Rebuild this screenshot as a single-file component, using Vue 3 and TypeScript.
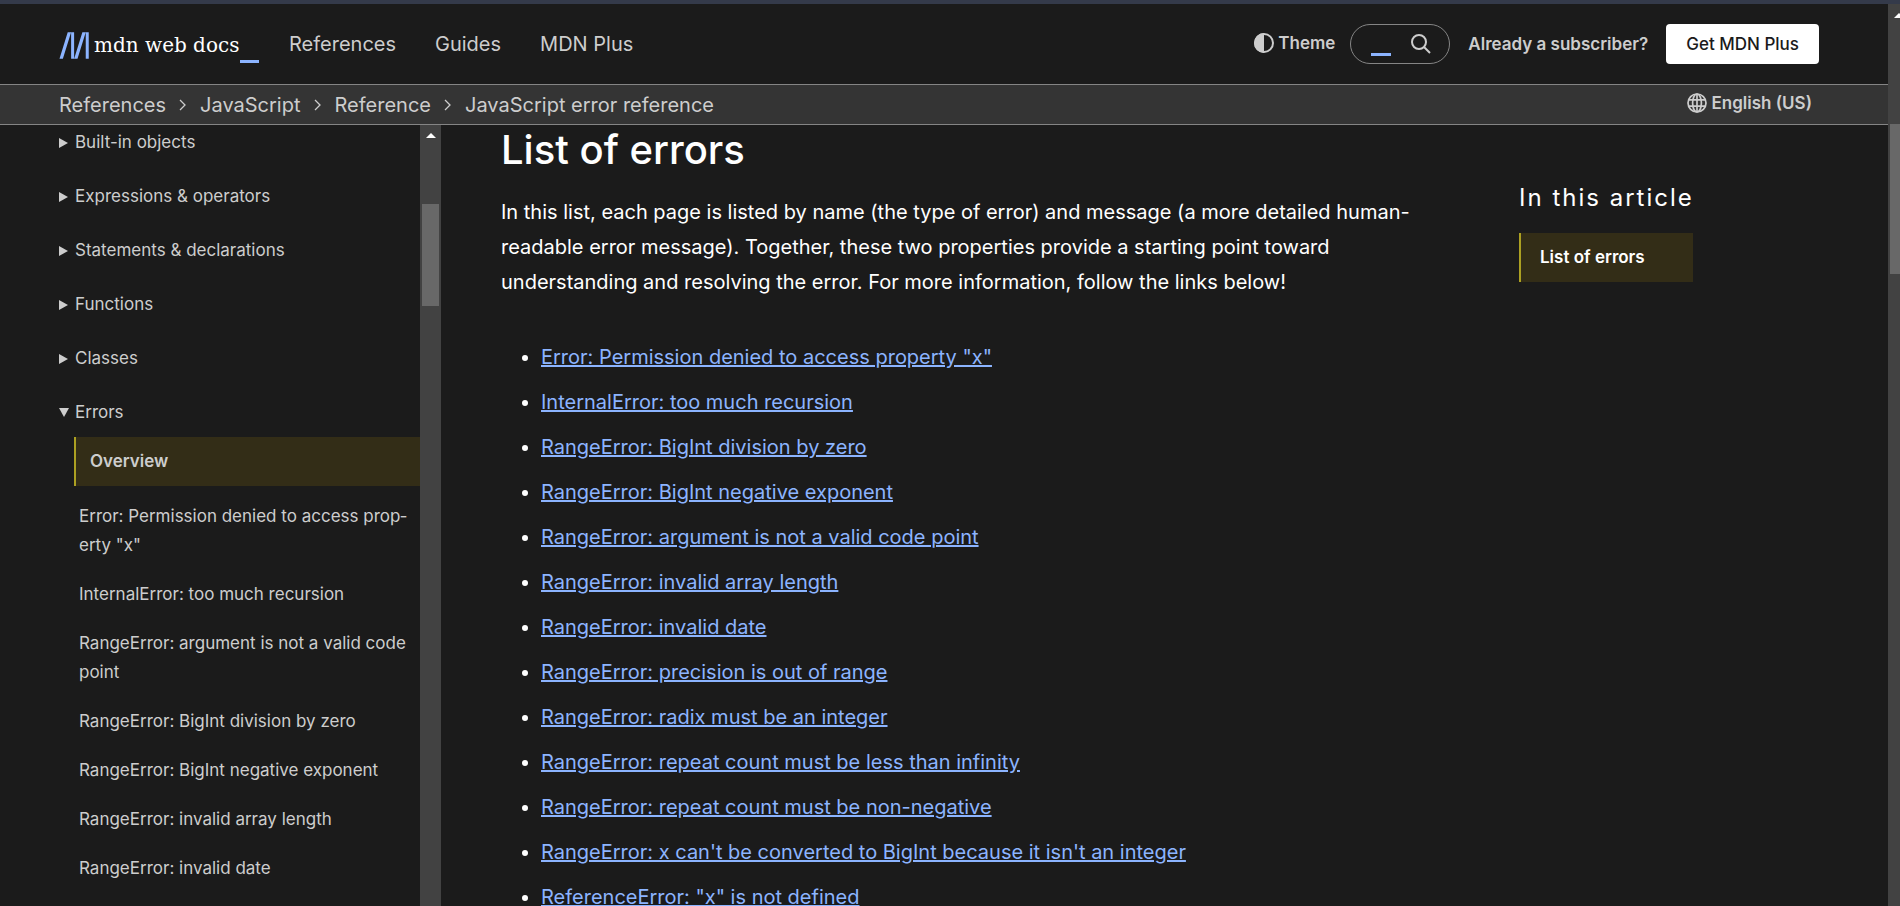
<script setup lang="ts">
interface SidebarLink {
  label: string
}

const navLinks: string[] = ['References', 'Guides', 'MDN Plus']
const crumbs: string[] = ['References', 'JavaScript', 'Reference', 'JavaScript error reference']
const closedSections: string[] = [
  'Built-in objects',
  'Expressions & operators',
  'Statements & declarations',
  'Functions',
  'Classes',
]
const sidebarLinks: SidebarLink[] = [
  { label: 'Error: Permission denied to access prop\u00ADerty "x"' },
  { label: 'InternalError: too much recursion' },
  { label: 'RangeError: argument is not a valid code point' },
  { label: 'RangeError: BigInt division by zero' },
  { label: 'RangeError: BigInt negative exponent' },
  { label: 'RangeError: invalid array length' },
  { label: 'RangeError: invalid date' },
]
const errors: string[] = [
  'Error: Permission denied to access property "x"',
  'InternalError: too much recursion',
  'RangeError: BigInt division by zero',
  'RangeError: BigInt negative exponent',
  'RangeError: argument is not a valid code point',
  'RangeError: invalid array length',
  'RangeError: invalid date',
  'RangeError: precision is out of range',
  'RangeError: radix must be an integer',
  'RangeError: repeat count must be less than infinity',
  'RangeError: repeat count must be non-negative',
  "RangeError: x can't be converted to BigInt because it isn't an integer",
  'ReferenceError: "x" is not defined',
]
</script>

<template>
  <div class="window">
    <div class="page">
      <header class="header">
        <a class="logo" href="#" aria-label="MDN home">
          <svg class="logo-mark" viewBox="0 0 104 93" aria-hidden="true">
            <path
              d="M42 .2 13.4 92.3H1.7L30.2.2H42ZM52.4.2v92.1H42V.2h10.4ZM92.7.2 64.2 92.3H52.5L81 .2h11.7ZM103.1.2v92.1H92.7V.2h10.4Z"
            />
          </svg>
          <span class="logo-text">mdn web docs</span>
          <span class="logo-cursor"></span>
        </a>
        <nav class="nav" aria-label="Main">
          <a v-for="link in navLinks" :key="link" href="#">{{ link }}</a>
        </nav>
        <div class="actions">
          <button class="theme" type="button">
            <svg class="icon" viewBox="0 0 20 20" aria-hidden="true">
              <circle cx="10" cy="10" r="9" fill="none" stroke="currentColor" stroke-width="2" />
              <path d="M10 0a10 10 0 0 0 0 20Z" fill="currentColor" />
            </svg>
            Theme
          </button>
          <form class="search" role="search" @submit.prevent>
            <input type="text" aria-label="Search" />
            <button type="submit" aria-label="Submit search">
              <svg class="icon" viewBox="0 0 20 20" fill="none" stroke="currentColor" aria-hidden="true">
                <circle cx="8" cy="8" r="7" stroke-width="2" />
                <path d="m13 13 6 6" stroke-width="2" />
              </svg>
            </button>
          </form>
          <a class="login" href="#">Already a subscriber?</a>
          <a class="subscribe" href="#">Get MDN Plus</a>
        </div>
      </header>

      <div class="crumb-bar">
        <nav aria-label="Breadcrumb">
          <ol class="crumbs">
            <li v-for="(crumb, index) in crumbs" :key="crumb">
              <svg v-if="index > 0" class="chevron" viewBox="0 0 8 12" aria-hidden="true">
                <path d="m1 1 5 5-5 5" fill="none" stroke="currentColor" stroke-width="1.3" />
              </svg>
              <a href="#">{{ crumb }}</a>
            </li>
          </ol>
        </nav>
        <button class="language" type="button">
          <svg class="icon" viewBox="0 0 20 20" fill="none" stroke="currentColor" stroke-width="1.7" aria-hidden="true">
            <circle cx="10" cy="10" r="9" />
            <ellipse cx="10" cy="10" rx="4.4" ry="9" />
            <path d="M10 1v18M2 6.8h16M2 13.2h16" />
          </svg>
          English (US)
        </button>
      </div>

      <div class="body">
        <aside class="sidebar">
          <div class="sidebar-inner">
            <details v-for="section in closedSections" :key="section">
              <summary>
                <svg class="marker" viewBox="0 0 10 10" aria-hidden="true"><path d="M0 0v10l9-5Z" /></svg>
                {{ section }}
              </summary>
            </details>
            <details open>
              <summary>
                <svg class="marker" viewBox="0 0 10 10" aria-hidden="true"><path d="M0 0h10L5 9Z" /></svg>
                Errors
              </summary>
              <ul class="section-links">
                <li><a class="current" href="#" aria-current="page">Overview</a></li>
                <li v-for="link in sidebarLinks" :key="link.label">
                  <a href="#">{{ link.label }}</a>
                </li>
              </ul>
            </details>
          </div>
          <div class="sidebar-track" aria-hidden="true">
            <svg class="arrow" viewBox="0 0 10 5"><path d="M0 5 5 0l5 5Z" /></svg>
            <div class="sidebar-thumb"></div>
          </div>
        </aside>

        <main class="content">
          <h2>List of errors</h2>
          <p>
            In this list, each page is listed by name (the type of error) and message (a more detailed
            human-readable error message). Together, these two properties provide a starting point toward
            understanding and resolving the error. For more information, follow the links below!
          </p>
          <ul>
            <li v-for="error in errors" :key="error"><a href="#">{{ error }}</a></li>
          </ul>
        </main>

        <aside class="toc">
          <h2>In this article</h2>
          <a href="#">List of errors</a>
        </aside>
      </div>
    </div>
    <div class="page-track" aria-hidden="true">
      <svg class="page-arrow" viewBox="0 0 10 5"><path d="M0 5 5 0l5 5Z" /></svg>
      <div class="page-thumb"></div>
    </div>
  </div>
</template>

<style>
body {
  margin: 0;
  background: #1b1b1b;
}
</style>

<style scoped>
* {
  box-sizing: border-box;
}

.window {
  display: flex;
  height: 100vh;
  overflow: hidden;
  border-top: 4px solid #343a4a;
  background: #1b1b1b;
  color: #fff;
  font-family: Inter, "Liberation Sans", sans-serif;
  font-size: 20px;
}

a {
  color: inherit;
  text-decoration: none;
}

button {
  display: flex;
  align-items: center;
  padding: 0;
  border: 0;
  background: none;
  color: inherit;
  font: inherit;
}

ul,
ol {
  margin: 0;
  padding: 0;
  list-style: none;
}

.icon {
  width: 20px;
  height: 20px;
}

.page {
  display: flex;
  flex: 1;
  flex-direction: column;
  min-width: 0;
}

.header {
  display: flex;
  flex: none;
  align-items: center;
  height: 80px;
  padding: 0 69px 0 59px;
  color: #cdcdcd;
}

.logo {
  display: flex;
  align-items: center;
  width: 200px;
  margin-right: 30px;
  padding-top: 2px;
}

.logo-mark {
  width: 30px;
  height: 27px;
  fill: #8cb4ff;
}

.logo-text {
  margin-left: 5px;
  color: #fff;
  font-family: "DejaVu Serif", serif;
  font-size: 20px;
  white-space: nowrap;
}

.logo-cursor {
  flex: none;
  width: 19px;
  height: 3px;
  margin: 32px 0 0 auto;
  background: #8cb4ff;
}

.nav {
  display: flex;
  gap: 39px;
}

.actions {
  display: flex;
  align-items: center;
  margin-left: auto;
  font-size: 17px;
  font-weight: 600;
}

.theme,
.language {
  gap: 4px;
  padding-bottom: 3px;
}

.search {
  display: flex;
  justify-content: space-between;
  width: 100px;
  height: 40px;
  margin: 0 18px 0 15px;
  padding: 0 18px 0 20px;
  border: 1px solid #858585;
  border-radius: 20px;
}

.search input {
  width: 20px;
  height: 31px;
  padding: 0;
  border: 0;
  border-bottom: 3px solid #8cb4ff;
  outline: 0;
  background: none;
  color: inherit;
}

.subscribe {
  display: flex;
  align-items: center;
  height: 40px;
  margin-left: 18px;
  padding: 0 20px;
  border-radius: 4px;
  background: #fff;
  color: #1b1b1b;
  font-weight: 500;
}

.crumb-bar {
  display: flex;
  flex: none;
  align-items: center;
  justify-content: space-between;
  height: 41px;
  padding: 0 76px 0 59px;
  border: solid #858585;
  border-width: 1px 0;
  background: #343434;
  color: #cdcdcd;
}

.crumbs,
.crumbs li {
  display: flex;
  align-items: center;
}

.chevron {
  width: 8px;
  height: 12px;
  margin: 0 13px;
}

.language {
  font-size: 17px;
  font-weight: 600;
}

.body {
  display: grid;
  flex: 1;
  grid-template-columns: 441px minmax(0, 1fr) 369px;
  min-height: 0;
}

.sidebar {
  display: flex;
  min-height: 0;
  color: #cdcdcd;
  font-size: 17px;
  line-height: 29px;
}

.sidebar-inner {
  flex: 1;
  overflow: hidden;
  padding: 3px 0 0 59px;
}

details {
  margin-bottom: 25px;
}

summary {
  display: flex;
  align-items: center;
  gap: 6px;
  list-style: none;
}

.marker {
  width: 10px;
  height: 10px;
  fill: #cdcdcd;
}

.section-links {
  margin: 10px 0 0 15px;
}

.section-links a {
  display: block;
  padding: 10px 8px 10px 5px;
}

.section-links .current {
  margin-bottom: 6px;
  padding-left: 14px;
  border-left: 2px solid #aca022;
  background: #332d17;
  font-weight: 600;
}

.sidebar-track {
  display: flex;
  flex-direction: column;
  align-items: center;
  width: 21px;
  padding-top: 8px;
  background: #424242;
}

.arrow {
  width: 10px;
  height: 5px;
  fill: #fff;
}

.sidebar-thumb {
  width: 17px;
  height: 102px;
  margin-top: 66px;
  background: #686868;
}

.content {
  overflow: hidden;
  padding: 0 90px 0 60px;
  line-height: 35px;
}

.content h2 {
  margin: 0;
  font-size: 40px;
  font-weight: 500;
  line-height: 50px;
}

.content p {
  margin: 20px 0 40px;
}

.content ul {
  padding-left: 40px;
  list-style: disc;
}

.content li {
  margin-bottom: 10px;
}

.content li a {
  color: #8cb4ff;
  text-decoration: underline;
}

.toc {
  padding: 58px 195px 0 0;
}

.toc h2 {
  margin: 0 0 20px;
  font-size: 24px;
  font-weight: 400;
  letter-spacing: 2px;
  line-height: 30px;
  white-space: nowrap;
}

.toc a {
  display: block;
  padding: 10px 19px;
  border-left: 2px solid #aca022;
  background: #332d17;
  font-size: 17px;
  font-weight: 600;
  line-height: 29px;
}

.page-track {
  flex: none;
  width: 12px;
  overflow: hidden;
  padding: 9px 0 0 2px;
  background: #424242;
}

.page-arrow {
  display: block;
  width: 10px;
  height: 5px;
  margin-left: 4px;
  fill: #fff;
}

.page-thumb {
  height: 150px;
  margin-top: 106px;
  background: #686868;
}
</style>
